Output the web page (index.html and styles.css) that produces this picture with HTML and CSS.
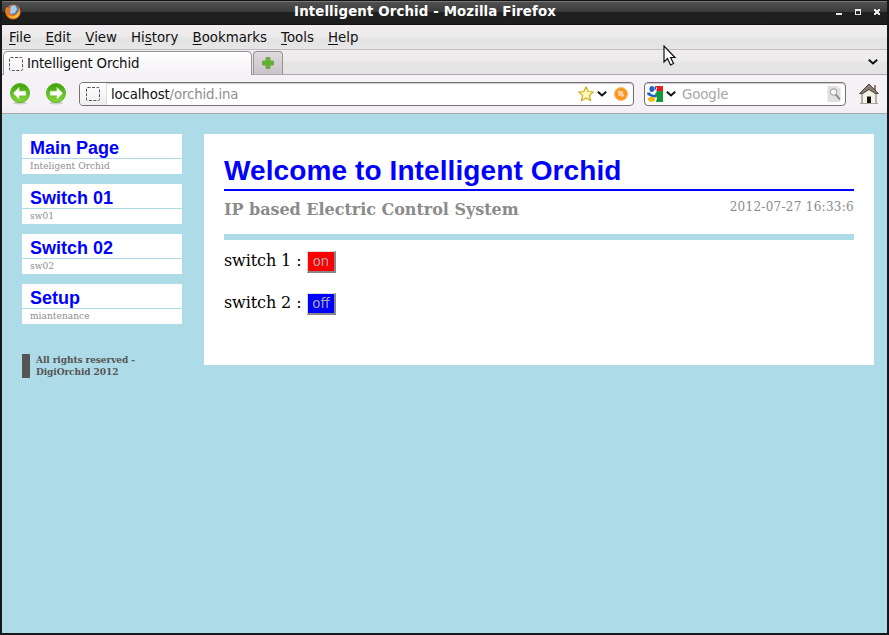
FILE: index.html
```html
<!DOCTYPE html>
<html lang="en">
<head>
<meta charset="utf-8">
<title>Intelligent Orchid</title>
<link rel="stylesheet" href="styles.css">
</head>
<body>
<div class="window">
  <header class="titlebar">
    <svg class="fox" width="16" height="16" viewBox="0 0 16 16"><circle cx="8" cy="8" r="7.6" fill="#d9601a"/><circle cx="8.6" cy="7" r="5.8" fill="#4d79b5"/><path d="M6 2l4-1 2 4-2 4-4 1-2-3z" fill="#a9cbe8"/><path d="M1 3c1 1 2 1 3 1l2 2-2 2c1 3 5 4 8 1 2-2 2-5 1-7 3 4 3 8 0 11-4 4-9 2-11-1C0 9 0 6 1 3z" fill="#e9781c"/><path d="M14 5c2 5-1 9-5 9-3 0-5-1-6-3 3 2 7 2 9-1 1-1 2-3 2-5z" fill="#fbc13d"/></svg>
    <span class="caption">Intelligent Orchid - Mozilla Firefox</span>
    <svg class="controls" width="46" height="8" viewBox="0 0 46 8" shape-rendering="crispEdges"><path d="M1 5h6v2H1z" fill="#e8e8e8"/><path d="M20 1h6v6h-6zM21 3v3h4V3z" fill="#e8e8e8" fill-rule="evenodd"/><path d="M39 1h2v1h2V1h2v2h-1v2h1v2h-2V6h-2v1h-2V5h1V3h-1z" fill="#e8e8e8"/></svg>
  </header>
  <nav class="menubar"><span><u>F</u>ile</span><span><u>E</u>dit</span><span><u>V</u>iew</span><span>Hi<u>s</u>tory</span><span><u>B</u>ookmarks</span><span><u>T</u>ools</span><span><u>H</u>elp</span></nav>
  <div class="tabbar">
    <div class="tab"><svg width="14" height="14" viewBox="0 0 14 14"><rect x=".5" y=".5" width="13" height="13" rx="1" fill="none" stroke="#555" stroke-dasharray="3 1.5"/></svg><span>Intelligent Orchid</span></div>
    <div class="newtab"><svg width="12" height="12" viewBox="0 0 12 12"><path d="M4 .5h4V4h3.500v4H8v3.500H4V8H.5V4H4z" fill="#5db32c" stroke="#79a35c"/></svg></div>
    <svg class="tablist" width="10" height="6" viewBox="0 0 10 6"><path d="M.8.8L5 4.500 9.200.8" fill="none" stroke="#111" stroke-width="2"/></svg>
  </div>
  <div class="toolbar">
    <svg class="back" width="20" height="22" viewBox="0 0 20 22"><defs><linearGradient id="green" x2="0" y2="1"><stop stop-color="#3ea00a"/><stop offset="1" stop-color="#86da35"/></linearGradient></defs><ellipse cx="10" cy="20" rx="7" ry="1.500" fill="#ccc"/><circle cx="10" cy="10" r="9.500" fill="url(#green)" stroke="#58b51e"/><path d="M3 10.300L9.300 4v4H16v4.700H9.300v4z" fill="#fff" stroke="#8ac65f" stroke-width=".6"/></svg>
    <svg class="forward" width="20" height="22" viewBox="0 0 20 22"><ellipse cx="10" cy="20" rx="7" ry="1.500" fill="#ccc"/><circle cx="10" cy="10" r="9.500" fill="url(#green)" stroke="#58b51e"/><path d="M17 10.300L10.700 4v4H4v4.700h6.700v4z" fill="#fff" stroke="#8ac65f" stroke-width=".6"/></svg>
    <div class="address">
      <div class="identity"><svg width="14" height="14" viewBox="0 0 14 14"><rect x=".5" y=".5" width="13" height="13" rx="1" fill="none" stroke="#555" stroke-dasharray="3 1.500"/></svg></div>
      <span class="url">localhost<i>/orchid.ina</i></span>
      <svg class="star" width="16" height="16" viewBox="0 0 16 16"><path d="M8 .8l2.100 4.700 5.200.5-3.900 3.400 1.300 5.400L8 12l-4.700 2.800 1.300-5.400L.7 6l5.200-.5z" fill="#fff9ba" stroke="#cfac1c" stroke-width="1.200" stroke-linejoin="round"/></svg>
      <svg class="drop" width="10" height="6" viewBox="0 0 10 6"><path d="M.8.8L5 4.500 9.200.8" fill="none" stroke="#111" stroke-width="2"/></svg>
      <svg class="go" width="14" height="14" viewBox="0 0 14 14"><circle cx="7" cy="7" r="6.500" fill="#fc941f" stroke="#f7b873"/><path d="M3.500 3.500l6 1L9 6l1.300 2.500-1.800 1.800L6 8.300 4.500 9.500z" fill="#fbd3a3"/></svg>
    </div>
    <div class="search">
      <svg class="google" width="16" height="16" viewBox="0 0 16 16"><path d="M8 0h8v5H9z" fill="#ed1c1c"/><path d="M10 5h6v11H9l1-4-2-4z" fill="#119a3b"/><path d="M8 0l2 2-1 4-3 2 3 4-1 4H0V0z" fill="#fff"/><ellipse cx="4.800" cy="3" rx="2.400" ry="2.900" fill="#2060c4"/><path d="M7.500 1l1.500-1v3l-1.500 2zM0 6.500h2.500L5 8.500l4 .5.500 2.500L5 11 .5 9z" fill="#2060c4"/><ellipse cx="4.500" cy="13.300" rx="3.500" ry="2.500" fill="#f8b70d"/></svg>
      <svg class="drop" width="10" height="6" viewBox="0 0 10 6"><path d="M.8.8L5 4.500 9.200.8" fill="none" stroke="#111" stroke-width="2"/></svg>
      <span class="hint">Google</span>
      <svg class="find" width="14" height="16" viewBox="0 0 14 16"><path d="M1 .5h9L13 3v12.500H1z" fill="#e1e1e1" stroke="#ddd"/><circle cx="6.500" cy="6" r="3.200" fill="#f7f7f7" stroke="#aaa" stroke-width="1.200"/><path d="M8.800 8.500l4 5" stroke="#888" stroke-width="2"/></svg>
    </div>
    <svg class="home" width="20" height="22" viewBox="0 0 20 22"><path d="M15 2h2v6h-2z" fill="#91806d"/><path d="M3 10l7-6 7 6v10.500H3z" fill="#f5f1e6" stroke="#75706a"/><path d="M8 13.500h4V20H8z" fill="#111"/><path d="M10 1L.7 10.500h3L10 6.500l6.300 4h3z" fill="#8b7d6e" stroke="#4b433c"/><path d="M1 20.500h18" stroke="#aaa69a"/></svg>
  </div>
  <main class="page">
    <aside class="sidebar">
      <a class="item"><b>Main Page</b><small>Inteligent Orchid</small></a>
      <a class="item"><b>Switch 01</b><small>sw01</small></a>
      <a class="item"><b>Switch 02</b><small>sw02</small></a>
      <a class="item"><b>Setup</b><small>miantenance</small></a>
      <p class="rights">All rights reserved -<br>DigiOrchid 2012</p>
    </aside>
    <section class="content">
      <h1>Welcome to Intelligent Orchid</h1>
      <div class="subhead"><h2>IP based Electric Control System</h2><time>2012-07-27 16:33:6</time></div>
      <div class="switch"><span>switch 1 :</span><button class="on">on</button></div>
      <div class="switch"><span>switch 2 :</span><button class="off">off</button></div>
    </section>
  </main>
  <svg class="pointer" width="14" height="22" viewBox="0 0 14 22"><path d="M1 1v16l3.500-3.500L7.500 20l3-1.500L7.600 12.500H12z" fill="#fff" stroke="#111" stroke-width="1.200"/></svg>
</div>
</body>
</html>
```
FILE: styles.css
```css
* { box-sizing: border-box; }
body { margin: 0; font: 13.33px "DejaVu Sans", sans-serif; color: #111; }
svg { display: block; flex: none; }
.window { height: 635px; border: 2px solid #161718; border-top: 0; display: flex; flex-direction: column; overflow: hidden; }
.titlebar { height: 25px; flex: none; display: flex; align-items: center; padding: 0 6px 1px 3px; background: linear-gradient(#111 0 1px, #777 1px 2px, #505050 2px, #3a3a3a 12px, #202020 12px, #1d1d1d 24px, #111 24px); }
.caption { flex: 1; text-align: center; color: #fff; font-weight: bold; letter-spacing: .13px; padding-right: 6px; line-height: 22px; padding-bottom: 1px; }
.menubar { height: 25px; flex: none; display: flex; gap: 14.2px; padding-left: 7px; line-height: 26px; letter-spacing: -.02px; background: linear-gradient(#f0ecef, #eeebec 10px, #e4e4e4 14px, #e6e6e6); border-bottom: 1px solid #c1bcbf; }
.menubar u { text-underline-offset: 2px; text-decoration-thickness: 1px; }
.tabbar { height: 25px; flex: none; display: flex; background: linear-gradient(#f0ecef, #eeebec 10px, #e5e4e4 14px, #e4e4e4); border-bottom: 1px solid #aaa5a8; }
.tab { width: 249px; height: 24px; margin: 1px 0 0 1px; display: flex; align-items: center; gap: 4px; padding: 0 5px; letter-spacing: -.16px; border: 1px solid #969396; border-bottom: 0; border-radius: 5px 5px 0 0; background: linear-gradient(#fff, #fbf9fb 9px, #f5f2f6); }
.newtab { width: 30px; height: 23px; margin: 1px 0 0 1px; display: flex; align-items: center; justify-content: center; border: 1px solid #969396; border-bottom: 0; border-radius: 4px 4px 0 0; background: linear-gradient(#dedade, #c8c4c9); }
.tablist { margin: 9px 9px 0 auto; }
.toolbar { height: 39px; flex: none; display: flex; align-items: center; padding: 0 8px 0; background: linear-gradient(#f5f1f6, #f5f2f6 32px, #efedef); border-bottom: 1px solid #aaa9aa; }
.forward { margin-left: 16px; }
.address, .search { height: 24px; display: flex; align-items: center; background: #fff; border: 1px solid #747074; border-radius: 4px; box-shadow: inset 0 1px 1px #ccc; }
.address { width: 555px; margin-left: 13px; padding-right: 5px; }
.identity { width: 27px; height: 22px; padding: 4px 6px; background: linear-gradient(#fff, #eee); border-right: 1px solid #ddd; border-radius: 3px 0 0 3px; }
.url { flex: 1; padding: 1px 0 0 4px; letter-spacing: -.14px; }
.url i { font-style: normal; color: #8e8e8e; }
.address .drop { margin: 0 7px 0 3px; }
.search { width: 202px; margin-left: 10px; padding: 0 4px 0 2px; }
.search .drop { margin: 0 6px 0 3px; }
.hint { flex: 1; padding-top: 1px; letter-spacing: -.1px; color: #aaa5a5; }
.home { margin-left: 13px; }
.page { flex: 1; display: flex; gap: 22px; align-items: flex-start; padding: 20px 13px 0 20px; background: #addbe7; font-family: "DejaVu Serif", serif; }
.sidebar { width: 160px; flex: none; display: flex; flex-direction: column; gap: 10px; }
.item { height: 40px; background: #fff; display: flex; flex-direction: column; }
.item b { height: 25px; padding: 3px 8px 0; font: bold 18px/23px "Liberation Sans", sans-serif; color: #00f; border-bottom: 1px solid #addbe7; }
.item small { padding-left: 8px; font-size: 9px; line-height: 14px; letter-spacing: .07px; color: #8d8d8d; }
.rights { margin: 20px 0 0; padding-left: 6px; border-left: 8px solid #555; color: #555; font-size: 9px; font-weight: bold; line-height: 12px; letter-spacing: -.07px; }
.content { flex: 1; height: 231px; padding: 20px; background: #fff; }
h1 { margin: 0 0 3px; height: 37px; font: bold 28px/34px "Liberation Sans", sans-serif; letter-spacing: .1px; color: #00f; border-bottom: 2px solid #00f; }
.subhead { height: 46px; display: flex; justify-content: space-between; border-bottom: 6px solid #addbe7; color: #8b8b8b; margin-bottom: 9px; }
h2 { margin: 0; font-size: 16px; line-height: 31px; letter-spacing: -.03px; }
.subhead time { font-size: 12px; line-height: 26px; letter-spacing: .28px; }
.switch { height: 42px; display: flex; align-items: flex-start; font-size: 16px; line-height: 23px; color: #000; }
.switch span { width: 83px; letter-spacing: -.1px; }
.switch button { width: 29px; height: 22px; margin-top: 2px; padding: 0; border: 1px solid #ddd; border-right: 2px solid #888; border-bottom: 2px solid #888; color: #aaa; font: 13.33px/19px "DejaVu Sans", sans-serif; }
.switch .on { background: #f00; }
.switch .off { background: #00f; }
.pointer { position: absolute; left: 663px; top: 45px; }
```
